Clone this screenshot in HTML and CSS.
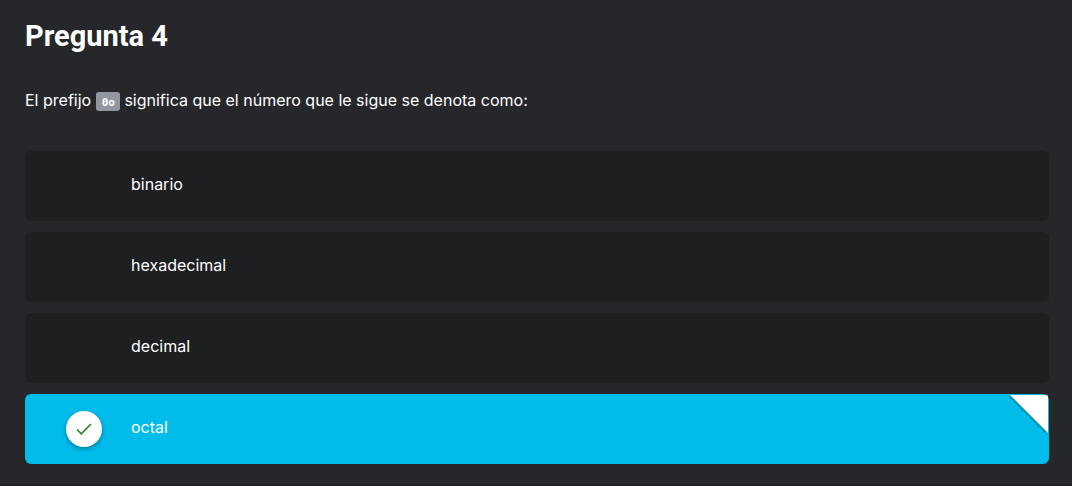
FILE: index.html
```html
<!DOCTYPE html>
<html lang="es">
<head>
<meta charset="utf-8">
<meta name="viewport" content="width=device-width, initial-scale=1">
<title>Pregunta 4</title>
<link rel="stylesheet" href="styles.css">
</head>
<body>
<main class="question">
  <h1 class="question-title">Pregunta 4</h1>
  <p class="question-text" id="prompt">El prefijo <code class="code">0o</code> significa que el número que le sigue se denota como:</p>
  <div class="options" role="radiogroup" aria-labelledby="prompt">
    <label class="option">
      <span class="marker"><input class="radio" type="radio" name="answer" value="binario"></span>
      <span class="option-text">binario</span>
    </label>
    <label class="option">
      <span class="marker"><input class="radio" type="radio" name="answer" value="hexadecimal"></span>
      <span class="option-text">hexadecimal</span>
    </label>
    <label class="option">
      <span class="marker"><input class="radio" type="radio" name="answer" value="decimal"></span>
      <span class="option-text">decimal</span>
    </label>
    <label class="option option-selected">
      <span class="marker">
        <input class="radio" type="radio" name="answer" value="octal" checked>
        <svg class="check" viewBox="0 0 18 18" aria-hidden="true"><path d="M2 9.5 6.3 13.8 16 4"/></svg>
      </span>
      <span class="option-text">octal</span>
      <svg class="corner" viewBox="0 0 38 38" aria-hidden="true"><path d="M0 0H36Q38 0 38 2V38Z"/></svg>
    </label>
  </div>
</main>
</body>
</html>
```
FILE: styles.css
```css
* {
  box-sizing: border-box;
}

body {
  margin: 0;
  min-height: 100vh;
  background: #26272b;
  color: #fff;
  font: 16px/24px Inter, "Liberation Sans", sans-serif;
}

.question {
  min-height: 100vh;
  padding: 16px 23px 20px 25px;
  border-bottom: 2px solid #222226;
}

.question-title {
  margin: 0 0 32px;
  font-family: Roboto, "Liberation Sans", sans-serif;
  font-size: 29px;
  line-height: 40px;
  font-weight: 700;
}

.question-text {
  margin: 0 0 39px;
}

.code {
  padding: 4px 5px 2px 6px;
  border-radius: 3px;
  background: #9196a1;
  font: 700 11px/14px "DejaVu Sans Mono", monospace;
}

.options {
  display: grid;
  gap: 11px;
}

.option {
  position: relative;
  display: grid;
  grid-template-columns: 36px 1fr;
  align-items: center;
  column-gap: 29px;
  min-height: 70px;
  padding: 0 41px;
  border-radius: 6px;
  background: #1e1f21;
  cursor: pointer;
}

.option-selected {
  background: #00bceb;
}

.option-text {
  padding-bottom: 4px;
}

.marker {
  display: grid;
  place-items: center;
}

.radio,
.check {
  grid-area: 1 / 1;
}

.radio {
  appearance: none;
  width: 36px;
  height: 36px;
  margin: 0;
  border-radius: 50%;
}

.radio:checked {
  background: #fff;
  box-shadow: 0 2px 5px rgba(0, 0, 0, 0.35);
}

.check {
  z-index: 1;
  width: 18px;
  height: 18px;
  fill: none;
  stroke: #2f8528;
  stroke-width: 1.6;
}

.corner {
  position: absolute;
  top: 1px;
  right: 1px;
  width: 38px;
  height: 38px;
  fill: #fff;
  filter: drop-shadow(-1px 1px 1px rgba(0, 0, 0, 0.35));
}
```
